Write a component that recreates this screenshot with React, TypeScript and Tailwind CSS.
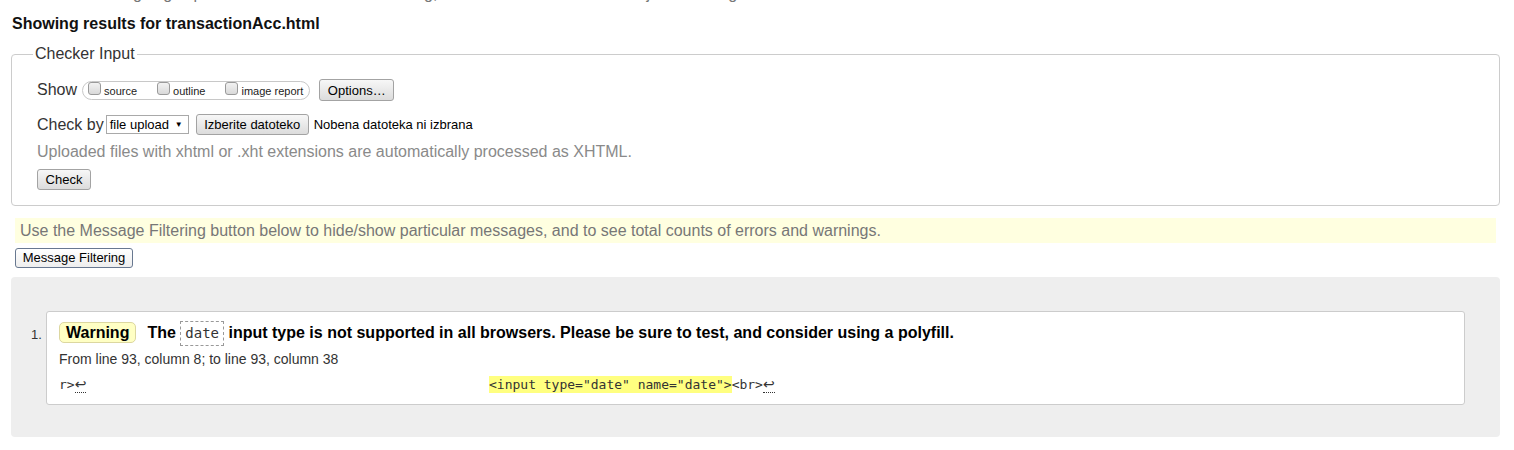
import React from 'react';

const btn =
  "h-[21px] px-[7px] border border-[#a3a3a3] rounded-[3px] bg-gradient-to-b from-[#f7f7f7] to-[#dcdcdc] text-[13px] leading-[19px] text-black";

const Box: React.FC<{ label: string }> = ({ label }) => (
  <span className="flex items-center">
    <span className="w-[13px] h-[13px] rounded-[3px] border border-[#9a9a9a] bg-gradient-to-b from-[#f2f2f2] to-[#d9d9d9] mt-[-3px]" />
    <span className="ml-[3px] text-[11px] leading-[13px] text-[#222] mt-[2px]">{label}</span>
  </span>
);

const App: React.FC = () => {
  return (
    <div className="w-[1514px] h-[450px] overflow-hidden bg-white font-['Liberation_Sans',Arial,sans-serif] text-[#222]">
      <div className="pl-[11px] w-[1500px]">
        {/* clipped intro line */}
        <p className="mt-[-16px] pl-[1px] text-[16px] leading-[20px] text-[#777] whitespace-nowrap">
          This tool is an ongoing experiment in better HTML checking, and its behavior remains subject to change.
        </p>

        <h2 className="mt-[10px] pl-[1px] text-[16px] leading-[20px] font-bold text-[#111]">
          Showing results for transactionAcc.html
        </h2>

        {/* --- CHECKER INPUT --- */}
        <fieldset className="mt-[11px] border border-[#cccccc] rounded-[4px] pb-[15px]">
          <legend className="ml-[21px] px-[2px] text-[16px] leading-[18px] text-[#333]">Checker Input</legend>

          <div className="pl-[25px]">
            <div className="mt-[16px] flex items-center h-[22px]">
              <span className="text-[16px] leading-[18px] text-[#333]">Show</span>
              <span className="ml-[5px] h-[19px] flex items-center gap-[20px] border border-[#c8c8c8] rounded-full pl-[5px] pr-[6px]">
                <Box label="source" />
                <Box label="outline" />
                <Box label="image report" />
              </span>
              <button className={`ml-[9px] h-[22px] w-[75px] px-0 ${btn}`}>Options…</button>
            </div>

            <div className="mt-[13px] flex items-center h-[21px]">
              <span className="text-[16px] leading-[18px] text-[#333]">Check by</span>
              <span className="ml-[2px] h-[19px] w-[83px] flex items-center justify-between border border-[#a9a9a9] bg-white pl-[3px] pr-[5px] text-[13px] leading-[17px] text-black">
                file upload<span className="text-[8px]">▼</span>
              </span>
              <button className={`ml-[7px] w-[113px] px-0 ${btn}`}>Izberite datoteko</button>
              <span className="ml-[5px] text-[13px] leading-[17px] text-black">Nobena datoteka ni izbrana</span>
            </div>

            <p className="mt-[8px] text-[16px] leading-[18px] text-[#8a8a8a]">
              Uploaded files with xhtml or .xht extensions are automatically processed as XHTML.
            </p>

            <div className="mt-[8px] flex">
              <button className={`w-[54px] px-0 ${btn}`}>Check</button>
            </div>
          </div>
        </fieldset>

        {/* --- FILTER NOTE --- */}
        <div className="mt-[12px] ml-[4px] w-[1481px] h-[25px] bg-[#ffffe0] pl-[5px] text-[16px] leading-[25px] text-[#777]">
          Use the Message Filtering button below to hide/show particular messages, and to see total counts of errors and warnings.
        </div>
        <div className="mt-[5px] ml-[4px] flex">
          <button className="h-[20px] w-[118px] border border-[#687890] rounded-[3px] bg-gradient-to-b from-[#ffffff] to-[#eeeeee] text-[13px] leading-[18px] text-black">
            Message Filtering
          </button>
        </div>

        {/* --- RESULTS --- */}
        <div className="mt-[9px] w-[1489px] h-[160px] bg-[#eeeeee] rounded-[4px] pl-[20px] pr-[35px] pt-[34px] flex items-start">
          <span className="w-[11px] mt-[16px] text-[13px] leading-[16px] text-[#333]">1.</span>
          <div className="ml-[4px] flex-1 h-[94px] bg-white border border-[#cccccc] rounded-[3px] pl-[12px] pt-[9px]">
            <div className="text-[16px] leading-[19px] font-bold text-black whitespace-nowrap">
              <span className="inline-block h-[21px] px-[6px] border border-[#dcd7a0] rounded-[5px] bg-[#ffffc4]">Warning</span>
              <span className="ml-[11px]">The </span>
              <code className="inline-block h-[25px] px-[4px] border border-dashed border-[#999] font-['DejaVu_Sans_Mono',monospace] text-[14px] leading-[23px] font-normal text-[#333]">date</code>
              <span> input type is not supported in all browsers. Please be sure to test, and consider using a polyfill.</span>
            </div>
            <p className="mt-[5px] text-[14px] leading-[16px] text-[#333]">From line 93, column 8; to line 93, column 38</p>
            <div className="mt-[9px] flex font-['DejaVu_Sans_Mono',monospace] text-[13px] leading-[17px] text-[#333] whitespace-pre">
              <span className="w-[430px]">
                r&gt;<span className="border-b border-dotted border-[#333] font-['DejaVu_Sans',sans-serif] text-[14px]">↩</span>
              </span>
              <span className="bg-[#ffff80]">&lt;input type="date" name="date"&gt;</span>
              <span>
                &lt;br&gt;<span className="border-b border-dotted border-[#333] font-['DejaVu_Sans',sans-serif] text-[14px]">↩</span>
              </span>
            </div>
          </div>
        </div>
      </div>
    </div>
  );
};

export default App;
